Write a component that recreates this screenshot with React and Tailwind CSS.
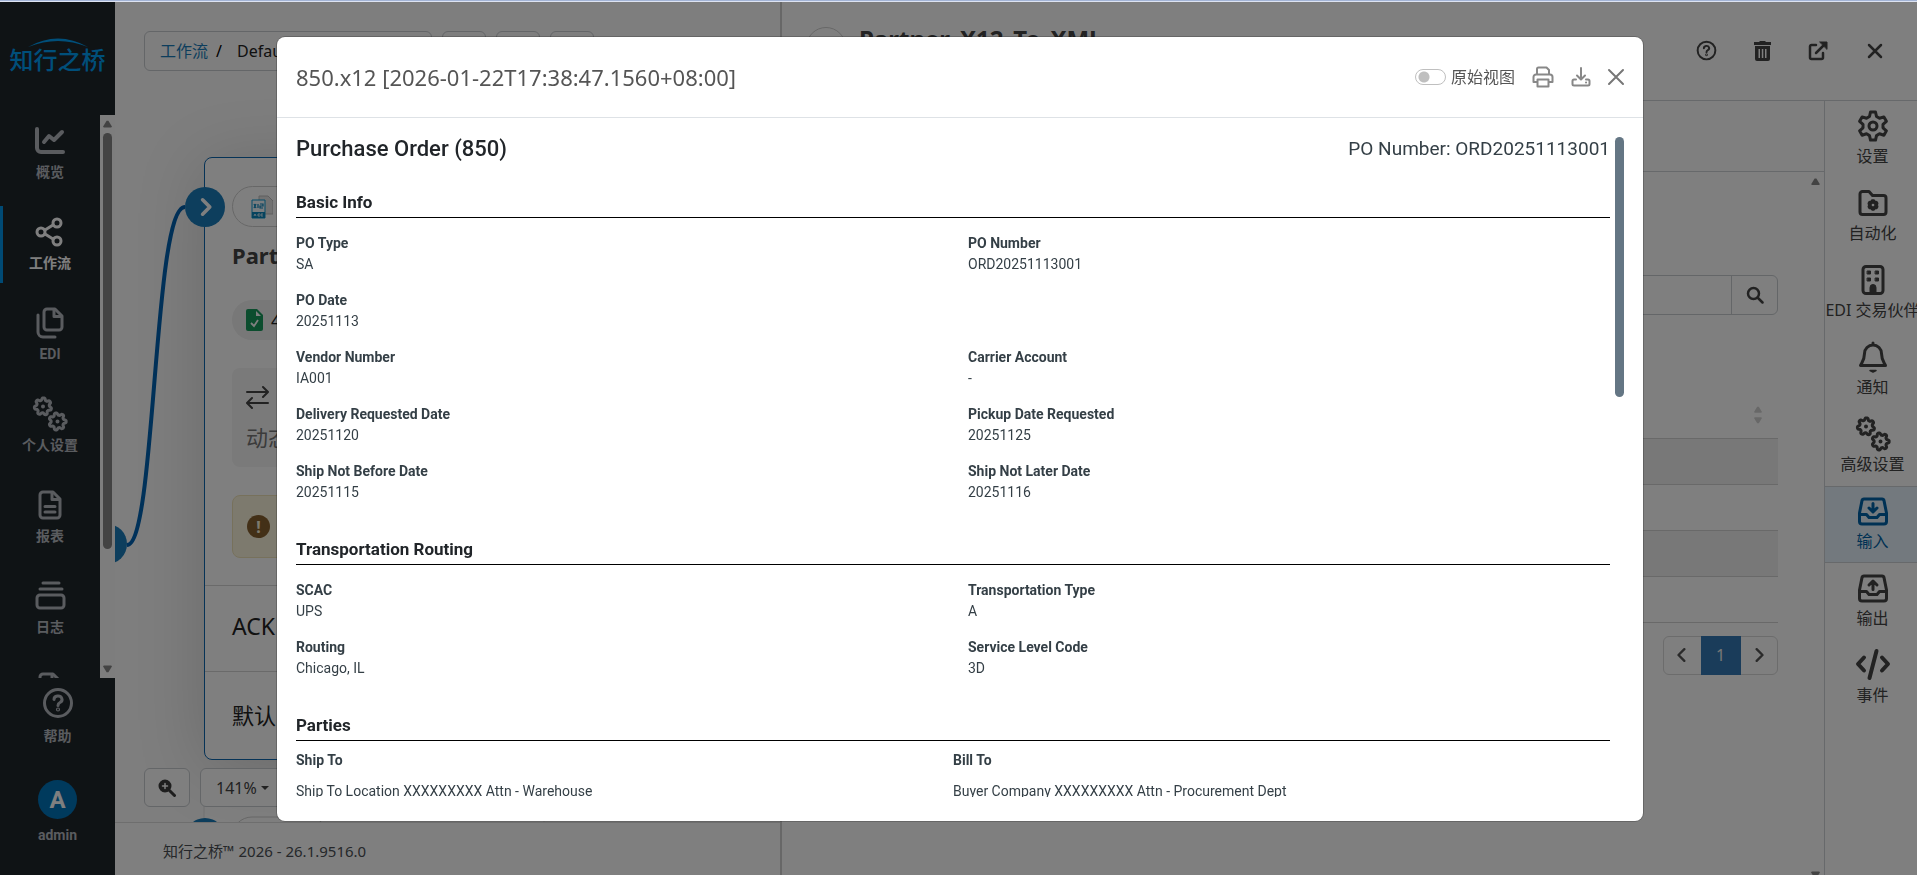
import { useState } from 'react';

const gearPath = (cx, cy, r, teeth, turn = 0) => {
  const pts = Array.from({ length: 84 }, (_, i) => {
    const a = (i / 84) * Math.PI * 2;
    const wave = Math.max(-1, Math.min(1, 1.5 * Math.cos(teeth * a)));
    const rad = r * (1 + 0.15 * wave);
    return `${(cx + rad * Math.cos(a + turn)).toFixed(2)} ${(cy + rad * Math.sin(a + turn)).toFixed(2)}`;
  });
  return `M${pts.join('L')}Z`;
};

const Icon = ({ children, box = 32, sw = 3, className = 'size-8' }) => (
  <svg
    className={className}
    viewBox={`0 0 ${box} ${box}`}
    fill="none"
    stroke="currentColor"
    strokeWidth={sw}
    strokeLinecap="round"
    strokeLinejoin="round"
    aria-hidden="true"
  >
    {children}
  </svg>
);

const ChartIcon = () => (
  <Icon sw={4}>
    <path d="M3 4v19a4 4 0 0 0 4 4h22" />
    <path d="M10 17l5-6 5 4 8-8" />
  </Icon>
);

const ShareIcon = () => (
  <Icon>
    <circle cx="7" cy="16" r="4" />
    <circle cx="23" cy="7" r="4" />
    <circle cx="23" cy="25" r="4" />
    <path d="M11 14l8-5M11 18l8 5" />
  </Icon>
);

const FilesIcon = () => (
  <Icon>
    <path d="M13 2h8l7 7v11a3 3 0 0 1-3 3H13a3 3 0 0 1-3-3V5a3 3 0 0 1 3-3z" />
    <path d="M20 2.500v7h7.500" />
    <path d="M4 8v17a5 5 0 0 0 5 5h12" />
  </Icon>
);

const GearsIcon = ({ className = 'size-9' }) => (
  <Icon box={36} sw={3} className={className}>
    <path d={gearPath(11, 10.5, 7.5, 7, 0.3)} />
    <circle cx="11" cy="10.500" r="1" strokeWidth="2" />
    <path d={gearPath(25.5, 25.5, 7.5, 7, 0)} />
    <circle cx="25.500" cy="25.500" r="1" strokeWidth="2" />
  </Icon>
);

const ReportIcon = () => (
  <Icon>
    <path d="M9 3h10l7 7v16a3 3 0 0 1-3 3H9a3 3 0 0 1-3-3V6a3 3 0 0 1 3-3z" />
    <path d="M18 3.500v7h7.500" />
    <path d="M11 17.500h10M11 23h10" />
  </Icon>
);

const LogIcon = () => (
  <Icon>
    <path d="M9 3h16M6 9h22" />
    <rect x="3" y="15" width="27" height="13" rx="3" />
  </Icon>
);

const QuestionIcon = ({ className = 'size-8' }) => (
  <Icon sw={3} className={className}>
    <circle cx="16" cy="16" r="13.500" />
    <path d="M12 12.500a4 3.500 0 1 1 6 3q-2 1-2 3" />
    <circle cx="16" cy="22.500" r="0.600" />
  </Icon>
);

const SettingsIcon = () => (
  <Icon sw={3}>
    <path d="M13.500 2h5l1 4.500 3 1.800 4.400-1.400 2.500 4.400-3.400 3v3.500l3.400 3-2.500 4.400-4.400-1.400-3 1.800-1 4.500h-5l-1-4.500-3-1.800-4.400 1.400-2.500-4.400 3.400-3v-3.500l-3.400-3 2.500-4.400 4.400 1.400 3-1.800z" />
    <circle cx="16" cy="16" r="4" />
  </Icon>
);

const FolderGearIcon = () => (
  <Icon>
    <path d="M3 7a2.500 2.500 0 0 1 2.500-2.500H12l3.500 4h11A2.500 2.500 0 0 1 29 11v14a2.500 2.500 0 0 1-2.500 2.500h-21A2.500 2.500 0 0 1 3 25z" />
    <path d={gearPath(16, 18, 3.5, 6, 0.52)} strokeWidth="3.500" />
  </Icon>
);

const BuildingIcon = () => (
  <Icon>
    <rect x="6" y="2.500" width="20" height="27" rx="3" />
    <g fill="currentColor" strokeWidth="1">
      <rect x="10.500" y="7" width="3" height="3" />
      <rect x="18.500" y="7" width="3" height="3" />
      <rect x="10.500" y="14" width="3" height="3" />
      <rect x="18.500" y="14" width="3" height="3" />
      <path d="M13 29v-5.500a3 3 0 0 1 6 0V29z" />
    </g>
  </Icon>
);

const BellIcon = () => (
  <Icon>
    <path d="M16 2v2M16 4a8.500 8.500 0 0 0-8.500 8.500c0 6-2 8-4 12h25c-2-4-4-6-4-12A8.500 8.500 0 0 0 16 4z" />
    <path d="M13 29.500h6l-3 1.500z" fill="currentColor" strokeWidth="1.500" />
  </Icon>
);

const TrayIcon = ({ up }) => (
  <Icon>
    <path d="M7 4h18a2 2 0 0 1 2 1.600l2.500 12.400v8.500a2.500 2.500 0 0 1-2.500 2.500H5a2.500 2.500 0 0 1-2.500-2.500V18L5 5.600A2 2 0 0 1 7 4z" />
    <path d="M2.500 19.500H9.500l2.500 3h8l2.500-3h7" />
    <path d={up ? 'M16 17.500V9.500M12 13l4-4 4 4' : 'M16 8.500v8M12 13l4 4 4-4'} />
  </Icon>
);

const CodeIcon = () => (
  <Icon box={36} sw={4} className="size-9">
    <path d="M9 10.500L3 17l6 6.500M27 10.500l6 6.500-6 6.500M21.500 4L14.500 31" />
  </Icon>
);

const NAV = [
  { label: '概览', icon: ChartIcon },
  { label: '工作流', icon: ShareIcon, active: true },
  { label: 'EDI', icon: FilesIcon },
  { label: '个人设置', icon: GearsIcon },
  { label: '报表', icon: ReportIcon },
  { label: '日志', icon: LogIcon },
  { label: '审计', icon: ReportIcon },
];

const TABS = [
  { label: '设置', icon: SettingsIcon },
  { label: '自动化', icon: FolderGearIcon },
  { label: 'EDI 交易伙伴', icon: BuildingIcon },
  { label: '通知', icon: BellIcon },
  { label: '高级设置', icon: GearsIcon },
  { label: '输入', icon: TrayIcon, active: true },
  { label: '输出', icon: () => <TrayIcon up /> },
  { label: '事件', icon: CodeIcon },
];

const BASIC_INFO = [
  ['PO Type', 'SA'],
  ['PO Number', 'ORD20251113001'],
  ['PO Date', '20251113'],
  null,
  ['Vendor Number', 'IA001'],
  ['Carrier Account', '-'],
  ['Delivery Requested Date', '20251120'],
  ['Pickup Date Requested', '20251125'],
  ['Ship Not Before Date', '20251115'],
  ['Ship Not Later Date', '20251116'],
];

const ROUTING = [
  ['SCAC', 'UPS'],
  ['Transportation Type', 'A'],
  ['Routing', 'Chicago, IL'],
  ['Service Level Code', '3D'],
];

const PARTIES = [
  ['Ship To', 'Ship To Location XXXXXXXXX Attn - Warehouse'],
  ['Bill To', 'Buyer Company XXXXXXXXX Attn - Procurement Dept'],
];

const Arrow = ({ down, className }) => (
  <svg className={className} viewBox="0 0 10 8" fill="currentColor" aria-hidden="true">
    <path d={down ? 'M1 0h8l1 1-4 6.500H4L0 1z' : 'M4 .500h2L10 7 9 8H1L0 7z'} />
  </svg>
);

const SideNav = () => (
  <aside className="flex w-[115px] shrink-0 flex-col bg-[#1f262b] font-['Roboto','Noto_Sans_CJK_SC',sans-serif] text-sm font-bold text-[#b4b8bf]">
    <div className="flex h-[113px] flex-col items-center pt-9 text-[#009ff5]">
      <svg className="h-[9px] w-[60px]" viewBox="0 0 60 9" fill="currentColor" aria-hidden="true">
        <path d="M0 9Q30-8 60 9Q30-3 0 9z" />
      </svg>
      <span className="text-2xl leading-7 font-medium">知行之桥</span>
    </div>
    <div className="flex min-h-0 flex-1">
      <nav className="flex-1 overflow-hidden">
        {NAV.map(({ label, icon: NavIcon, active }) => (
          <a
            key={label}
            href="#"
            className={`mb-[14px] flex h-[77px] flex-col items-center border-l-3 pt-2 pr-[3px] ${
              active ? 'border-[#0094e8] text-white' : 'border-transparent'
            }`}
          >
            <span className="flex h-9 items-center"><NavIcon /></span>
            <span className="mt-[3px] leading-5">{label}</span>
          </a>
        ))}
      </nav>
      <div className="flex w-[15px] flex-col items-center bg-[#fafafa] py-[5px] text-[#868686]">
        <Arrow className="h-2 w-[9px]" />
        <div className="mt-[5px] h-[416px] w-[9px] rounded-full bg-[#868686]" />
        <Arrow down className="mt-auto h-2 w-[9px]" />
      </div>
    </div>
    <div className="flex h-[197px] flex-col items-center pt-[9px]">
      <a href="#" className="flex flex-col items-center">
        <QuestionIcon />
        <span className="mt-[7px] leading-5">帮助</span>
      </a>
      <a href="#" className="mt-[34px] flex flex-col items-center">
        <span className="flex size-[39px] items-center justify-center rounded-full bg-[#0074ba] text-2xl text-white">A</span>
        <span className="mt-[6px] leading-5">admin</span>
      </a>
    </div>
  </aside>
);

const FlowNode = () => (
  <div className="absolute top-[155px] left-[89px] w-[340px] rounded-lg border border-[#0d66ae] bg-white shadow-[0_8px_70px_rgba(0,0,0,0.16)]">
    <span className="absolute top-[29px] -left-5 flex size-10 items-center justify-center rounded-full bg-[#1a7cba] text-white">
      <Icon box={20} sw={3} className="size-6"><path d="M8 4l6 6-6 6" /></Icon>
    </span>
    <div className="px-[27px] pt-7">
      <div className="flex h-[41px] w-24 items-center rounded-full border border-[#cfcfcf] pl-[18px]">
        <svg className="h-6 w-[22px]" viewBox="0 0 22 24" aria-hidden="true">
          <path d="M8 1h9l5 5v13H8z" fill="#e4e4e4" stroke="#bdbdbd" />
          <path d="M1 5h13v18H1z" fill="#f4fbff" stroke="#0c9bd2" />
          <path d="M1 17h13v6H1z" fill="#0c86bd" />
          <path d="M3 9l2 4M5 9l-2 4M7 9v4M9 9h3v2H9v2h3" fill="none" stroke="#0c86bd" strokeWidth="1.200" />
          <path d="M3 21l1-2 1 2M9 19H7v2h2M12 19h-2v2h2" fill="none" stroke="#fff" strokeWidth="0.800" />
        </svg>
      </div>
      <div className="mt-3 text-[22px] leading-8 font-bold text-[#444]">Partner_X12_To_XML</div>
      <div className="mt-[29px] flex h-10 w-40 items-center gap-2 rounded-full bg-[#f0f0f0] pl-[14px] text-lg text-[#222]">
        <svg className="h-[22px] w-[17px]" viewBox="0 0 17 22" aria-hidden="true">
          <path d="M2 0h9l6 6v14a2 2 0 0 1-2 2H2a2 2 0 0 1-2-2V2a2 2 0 0 1 2-2z" fill="#189a5d" />
          <path d="M10 2l5 5h-5z" fill="#fff" />
          <path d="M5 14l3 3 4-6" fill="none" stroke="#fff" strokeWidth="1.800" />
        </svg>
        4
      </div>
      <div className="mt-7 flex h-[99px] flex-col justify-between rounded-lg bg-[#f4f4f4] px-[14px] pt-[17px] pb-4 text-[22px] leading-7 text-[#777]">
        <Icon box={24} sw={2} className="size-6 text-[#444]">
          <path d="M1 7h20M17 2l5 5-5 5M22 18H2M6 13l-5 5 5 5" />
        </Icon>
        动态
      </div>
      <div className="mt-7 flex h-[63px] items-center rounded-lg border border-[#efe3b8] bg-[#fbf5dd] pl-[14px]">
        <span className="flex size-[23px] items-center justify-center rounded-full bg-[#87602e] text-base font-bold text-[#fbf5dd]">!</span>
      </div>
    </div>
    <div className="mt-[27px] border-t border-[#d5d5d5] px-[27px] pt-[23px] pb-[27px] text-[23px] leading-[35px] text-[#222]">ACK</div>
    <div className="border-t border-[#d5d5d5] px-[27px] pt-[25px] pb-[26px] text-[22px] leading-9 text-[#222]">默认</div>
  </div>
);

const Workflow = () => (
  <main className="flex w-[665px] shrink-0 flex-col">
    <div className="relative flex flex-1 flex-col justify-between overflow-hidden bg-[#fcfcfc]">
      <svg className="absolute inset-0 size-full" aria-hidden="true">
        <path d="M12 543C41 543 38 205 70 205" fill="none" stroke="#0063b4" strokeWidth="4" />
        <circle cx="-8" cy="542" r="20" fill="#1a7cba" />
        <rect x="89" y="780" width="340" height="60" fill="#fff" stroke="#e3e3e3" />
        <circle cx="90" cy="836" r="20" fill="#1a7cba" />
        <rect x="117" y="815" width="96" height="40" rx="20" fill="#fff" stroke="#cfcfcf" />
      </svg>
      <FlowNode />
      <div className="flex gap-[10px] pt-[29px] pl-[29px]">
        <div className="flex h-10 w-[288px] items-center rounded-md border border-[#c8ccd0] px-[15px] text-base">
          <a href="#" className="text-[#1a7cba]">工作流</a>
          <span className="ml-2 text-black">/</span>
          <span className="ml-[15px] text-[#222]">Default</span>
        </div>
        {['撤销', '重做', '刷新'].map((name) => (
          <button key={name} type="button" aria-label={name} className="h-10 w-11 rounded-md border border-[#c8ccd0]" />
        ))}
      </div>
      <div className="relative flex gap-[10px] pb-[15px] pl-[29px]">
        <button type="button" aria-label="放大" className="flex h-[39px] w-[46px] items-center justify-center rounded-md border border-[#c8ccd0] bg-white text-[#3c3c3c]">
          <Icon box={18} sw={3} className="size-[18px]">
            <circle cx="7" cy="7" r="5.500" fill="currentColor" strokeWidth="2" />
            <path d="M11.500 11.500l5 5" />
            <path d="M7 4.500v5M4.500 7h5" stroke="#fff" strokeWidth="1.500" />
          </Icon>
        </button>
        <button type="button" className="flex h-[39px] w-[120px] items-center gap-1 rounded-md border border-[#c8ccd0] bg-white px-[15px] text-base text-[#444]">
          141%
          <svg className="h-1 w-2" viewBox="0 0 8 4" fill="currentColor" aria-hidden="true"><path d="M0 0h8L4 4z" /></svg>
        </button>
      </div>
    </div>
    <footer className="flex h-[53px] items-center border-t border-[#ddd] bg-white px-12 pt-1 text-[15px] text-[#4a4f54]">
      知行之桥™ 2026 - 26.1.9516.0
    </footer>
  </main>
);

const DetailPanel = () => (
  <section className="flex min-w-0 flex-1 flex-col border-l-2 border-[#cfcfcf] bg-white text-[#444]">
    <header className="flex h-[99px] items-start border-b border-[#cfd2d6] pt-[25px] pr-[34px] pl-6">
      <span className="flex size-10 items-center justify-center rounded-full border border-[#cfcfcf]">
        <span className="size-4 bg-[#ddd]" />
      </span>
      <h1 className="-mt-2 ml-[13px] py-1 text-2xl leading-8 font-bold">Partner_X12_To_XML</h1>
      <div className="ml-auto flex items-center gap-[37px] pt-[13px]">
        <button type="button" aria-label="帮助"><QuestionIcon className="size-[21px]" /></button>
        <button type="button" aria-label="删除">
          <svg className="h-5 w-[17px]" viewBox="0 0 17 20" fill="currentColor" aria-hidden="true">
            <path d="M6 0h5l1 1h5v3H0V1h5zM1 5h15v13a2 2 0 0 1-2 2H3a2 2 0 0 1-2-2zM4.500 8v9h1.500V8zM7.800 8v9h1.500V8zM11 8v9h1.500V8z" fillRule="evenodd" />
          </svg>
        </button>
        <button type="button" aria-label="在新窗口打开">
          <Icon box={20} sw={2.5} className="size-5">
            <path d="M8 4H3.500A1.500 1.500 0 0 0 2 5.500v11A1.500 1.500 0 0 0 3.500 18h10a1.500 1.500 0 0 0 1.500-1.500V12" />
            <path d="M8 12l9-9" />
            <path d="M12 1h7v7z" fill="currentColor" strokeWidth="1" />
          </Icon>
        </button>
        <button type="button" aria-label="关闭" className="pl-[2px]">
          <Icon box={16} sw={2.5} className="size-4"><path d="M2 2l12 12M14 2L2 14" /></Icon>
        </button>
      </div>
    </header>
    <div className="flex min-h-0 flex-1">
      <div className="flex min-w-0 flex-1 flex-col">
        <div className="h-[71px] border-b border-[#cfd2d6]" />
        <div className="flex min-h-0 flex-1">
          <div className="min-w-0 flex-1 pt-[103px] pr-[30px] pl-8">
            <div className="flex h-10 rounded-md border border-[#c8ccd0]">
              <input type="text" aria-label="搜索" className="min-w-0 flex-1 px-3 outline-none" />
              <button type="button" aria-label="搜索" className="flex w-[46px] items-center justify-center border-l border-[#c8ccd0]">
                <Icon box={18} sw={2.5} className="size-[18px]">
                  <circle cx="7.500" cy="7.500" r="5.500" />
                  <path d="M12 12l4.500 4.500" />
                </Icon>
              </button>
            </div>
            <table className="mt-[77px] w-full">
              <thead>
                <tr className="h-[46px] border-b border-[#d2d2d2]">
                  <th>
                    <div className="flex flex-col items-end gap-1 pr-4 text-[#d0d0d0]">
                      <Arrow className="h-[7px] w-2" />
                      <Arrow down className="h-[7px] w-2" />
                    </div>
                  </th>
                </tr>
              </thead>
              <tbody>
                {[0, 1, 2, 3].map((row) => (
                  <tr key={row} className="h-[46px] border-b border-[#d2d2d2] odd:bg-[#f0f0f0]"><td /></tr>
                ))}
              </tbody>
            </table>
            <div className="mt-[13px] ml-auto flex h-[39px] w-[115px] rounded-md border border-[#d8d8d8] text-[#555]">
              <button type="button" aria-label="上一页" className="flex flex-1 items-center justify-center">
                <Icon box={12} sw={2} className="size-[14px]"><path d="M8 1L3 6l5 5" /></Icon>
              </button>
              <button type="button" className="-my-px w-10 bg-[#3479b4] text-base text-[#eee]">1</button>
              <button type="button" aria-label="下一页" className="flex flex-1 items-center justify-center">
                <Icon box={12} sw={2} className="size-[14px]"><path d="M4 1l5 5-5 5" /></Icon>
              </button>
            </div>
          </div>
          <div className="flex w-4 flex-col justify-between pt-[6px] pl-[3px] text-[#868686]">
            <Arrow className="h-[7px] w-[9px]" />
            <Arrow down className="-mb-1 h-2 w-[9px]" />
          </div>
        </div>
      </div>
      <nav className="w-[93px] shrink-0 overflow-hidden border-l border-[#cfd2d6] text-base">
        {TABS.map(({ label, icon: TabIcon, active }) => (
          <a
            key={label}
            href="#"
            className={`flex h-[77px] flex-col items-center border-y pt-[6px] pl-[3px] ${
              active ? 'border-[#cfd2d6] bg-[#e6f3fd] text-[#0063a8]' : 'border-transparent'
            }`}
          >
            <span className="flex h-9 items-center"><TabIcon /></span>
            <span className="leading-6 whitespace-nowrap">{label}</span>
          </a>
        ))}
      </nav>
    </div>
  </section>
);

const SectionTitle = ({ children }) => (
  <h3 className="border-b border-black pb-[3px] text-[17px] leading-6 font-bold text-[#212529]">{children}</h3>
);

const FieldGrid = ({ fields }) => (
  <dl className="mt-[14px] mb-[34px] grid grid-cols-2 gap-x-[30px] gap-y-[14px]">
    {fields.map((field, i) => (
      <div key={i}>
        {field && <dt className="leading-[22px] font-bold">{field[0]}</dt>}
        {field && <dd className="leading-[21px]">{field[1]}</dd>}
      </div>
    ))}
  </dl>
);

const DocumentModal = () => {
  const [raw, setRaw] = useState(false);

  return (
    <div className="fixed inset-0 top-[2px] flex bg-black/50 pt-[35px] pr-[274px] pb-[54px] pl-[277px]">
      <div role="dialog" aria-label="850.x12" className="flex min-w-0 flex-1 flex-col rounded-lg bg-white shadow-[0_0_0_1px_rgba(0,0,0,0.2)]">
        <header className="flex h-[81px] shrink-0 items-center border-b border-[#dee2e6] pr-[18px] pl-[19px] text-[#555]">
          <h2 className="text-[22px]">850.x12 [2026-01-22T17:38:47.1560+08:00]</h2>
          <label className="ml-auto flex items-center gap-[5px] text-base">
            <input
              type="checkbox"
              role="switch"
              checked={raw}
              onChange={(e) => setRaw(e.target.checked)}
              className="h-4 w-[31px] appearance-none rounded-full border border-[#bfbfbf] bg-[radial-gradient(circle_at_8px_7px,#bfbfbf_5px,transparent_6px)] checked:bg-[radial-gradient(circle_at_21px_7px,#0063a8_5px,transparent_6px)]"
            />
            原始视图
          </label>
          <button type="button" aria-label="打印" className="ml-[17px] text-[#888]">
            <Icon box={22} sw={2} className="size-[22px]">
              <path d="M5 8V3a1.500 1.500 0 0 1 1.500-1.500h8L17 4v4" />
              <path d="M5 16H1.500v-5a2.500 2.500 0 0 1 2.500-2.500h14a2.500 2.500 0 0 1 2.500 2.500v5H17" />
              <path d="M5.500 13.500h11v7h-11z" />
            </Icon>
          </button>
          <button type="button" aria-label="下载" className="ml-[17px] text-[#888]">
            <Icon box={20} sw={2} className="size-5">
              <path d="M10 1v11M6 8.500l4 4 4-4" />
              <path d="M5 12.500H3A1.500 1.500 0 0 0 1.500 14v3A1.500 1.500 0 0 0 3 18.500h14a1.500 1.500 0 0 0 1.500-1.500v-3a1.500 1.500 0 0 0-1.500-1.500h-2M15 15.500h.1" />
            </Icon>
          </button>
          <button type="button" aria-label="关闭" className="ml-4 text-[#777]">
            <Icon box={18} sw={2} className="size-[18px]"><path d="M2 2l14 14M16 2L2 16" /></Icon>
          </button>
        </header>
        <div className="mt-[19px] mb-6 flex min-h-0 flex-1 justify-between pr-[19px] pl-[19px]">
          <div className="min-w-0 flex-1 overflow-hidden font-['Roboto',sans-serif] text-sm text-[#343f46]">
            <div className="mb-[29px] flex items-center justify-between">
              <h2 className="text-[22px] leading-6 font-medium text-[#212529]">Purchase Order (850)</h2>
              <span className="text-[19px] leading-6">PO Number: ORD20251113001</span>
            </div>
            <SectionTitle>Basic Info</SectionTitle>
            <FieldGrid fields={BASIC_INFO} />
            <SectionTitle>Transportation Routing</SectionTitle>
            <FieldGrid fields={ROUTING} />
            <SectionTitle>Parties</SectionTitle>
            <div className="mt-2 grid grid-cols-2">
              {PARTIES.map(([title, address]) => (
                <div key={title}>
                  <h4 className="leading-[22px] font-bold">{title}</h4>
                  <p className="mt-[9px] leading-[22px]">{address}</p>
                </div>
              ))}
            </div>
          </div>
          <div className="ml-[5px] w-[9px] shrink-0">
            <div className="h-[260px] rounded-full bg-[#647684]" />
          </div>
        </div>
      </div>
    </div>
  );
};

const App = () => (
  <div className="flex h-screen flex-col overflow-hidden font-['Noto_Sans','Noto_Sans_CJK_SC',sans-serif]">
    <div className="h-[2px] shrink-0 border-b border-[#dde3f2] bg-[#a3b4d6]" />
    <div className="flex min-h-0 flex-1">
      <SideNav />
      <Workflow />
      <DetailPanel />
    </div>
    <DocumentModal />
  </div>
);

export default App;
